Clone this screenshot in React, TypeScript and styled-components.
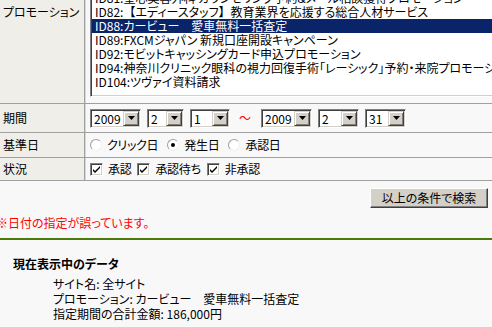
import React from "react";
import styled, { createGlobalStyle } from "styled-components";

const GlobalStyle = createGlobalStyle`
  html, body {
    margin: 0;
    padding: 0;
    background: #f8f8f8;
    overflow: hidden;
  }
  body {
    font-family: "Noto Sans CJK JP", "Noto Sans", sans-serif;
    font-size: 12px;
    color: #000;
    font-feature-settings: "palt";
  }
`;

const Page = styled.div`
  width: 492px;
  height: 327px;
  overflow: hidden;
`;

const Form = styled.div`
  width: 600px;
  margin-top: -9px;
  border-bottom: 1px solid #a0a0a0;
`;

const Row = styled.div<{ $h: number; $top?: boolean }>`
  display: grid;
  grid-template-columns: 85px 1fr;
  height: ${(p) => p.$h}px;
  border-top: 1px solid #a0a0a0;
  align-items: ${(p) => (p.$top ? "start" : "center")};
`;

const Label = styled.div<{ $pt?: number }>`
  align-self: stretch;
  display: flex;
  align-items: ${(p) => (p.$pt ? "flex-start" : "center")};
  padding: ${(p) => p.$pt ?? 0}px 0 0 3px;
  background: #efeee8;
  border-right: 1px solid #a0a0a0;
  line-height: 14px;
`;

const Value = styled.div<{ $pt?: number; $gap?: number }>`
  align-self: stretch;
  display: flex;
  align-items: ${(p) => (p.$pt !== undefined ? "flex-start" : "center")};
  padding: ${(p) => p.$pt ?? 0}px 0 0 4px;
  border-left: 1px solid #d8d8d8;
  gap: ${(p) => p.$gap ?? 6}px;
  line-height: 14px;
`;

const ListBox = styled.div`
  width: 440px;
  height: 101px;
  box-sizing: border-box;
  background: #fff;
  border: 1px solid;
  border-color: #808080 #fff #fff #808080;
  box-shadow: inset 1px 1px #404040, inset -1px -1px #d4d0c8;
  padding: 1px;
  overflow: hidden;
`;

const ListItems = styled.div`
  margin-top: -7px;
`;

const ListItem = styled.div<{ $selected?: boolean }>`
  height: 14px;
  line-height: 14px;
  padding-left: 3px;
  white-space: nowrap;
  background: ${(p) => (p.$selected ? "#0a246a" : "transparent")};
  color: ${(p) => (p.$selected ? "#fff" : "#000")};
`;

const Bracket = styled.span`
  font-feature-settings: normal;
`;

const SelectBox = styled.div<{ $w: number }>`
  width: ${(p) => p.$w}px;
  height: 19px;
  box-sizing: border-box;
  display: flex;
  align-items: stretch;
  background: #fff;
  border: 1px solid;
  border-color: #808080 #fff #fff #808080;
  box-shadow: inset 1px 1px #404040, inset -1px -1px #d4d0c8;
  padding: 1px;
`;

const SelectText = styled.div`
  flex: 1;
  padding-left: 2px;
  line-height: 15px;
`;

const ArrowButton = styled.div`
  width: 16px;
  box-sizing: border-box;
  background: #d4d0c8;
  border: 1px solid;
  border-color: #d4d0c8 #404040 #404040 #d4d0c8;
  box-shadow: inset 1px 1px #fff, inset -1px -1px #808080;
  display: flex;
  align-items: center;
  justify-content: center;
`;

const Tilde = styled.span`
  color: #ff0000;
  margin: 0 4px 0 3px;
`;

const Option = styled.label`
  display: flex;
  align-items: center;
  gap: 5px;
  letter-spacing: -0.3px;
`;

const Radio = styled.span<{ $checked?: boolean }>`
  width: 12px;
  height: 12px;
  box-sizing: border-box;
  border-radius: 50%;
  border: 1px solid;
  border-color: #a0a0a0 #f0f0f0 #f0f0f0 #a0a0a0;
  background: #fff;
  display: flex;
  align-items: center;
  justify-content: center;
  &::after {
    content: "";
    width: 4px;
    height: 4px;
    border-radius: 50%;
    background: ${(p) => (p.$checked ? "#000" : "transparent")};
  }
`;

const Check = styled.span`
  width: 13px;
  height: 13px;
  box-sizing: border-box;
  background: #fff;
  border: 1px solid;
  border-color: #808080 #fff #fff #808080;
  box-shadow: inset 1px 1px #404040, inset -1px -1px #d4d0c8;
  display: flex;
  align-items: center;
  justify-content: center;
`;

const ButtonRow = styled.div`
  display: flex;
  justify-content: flex-end;
  padding: 7px 4px 0 0;
`;

const Button = styled.button`
  width: 118px;
  height: 20px;
  padding: 0;
  font: inherit;
  font-feature-settings: "palt";
  line-height: 14px;
  color: #000;
  background: #d4d0c8;
  border: 1px solid;
  border-color: #fff #404040 #404040 #fff;
  box-shadow: inset -1px -1px #808080;
`;

const ErrorText = styled.p`
  margin: 8px 0 0;
  line-height: 14px;
  color: #ff0000;
  text-indent: -4px;
`;

const Divider = styled.hr`
  margin: 8px 0 0;
  height: 2px;
  border: 0;
  background: #4b7a08;
`;

const Summary = styled.section`
  padding: 17px 0 0 13px;
`;

const SummaryTitle = styled.h3`
  margin: 0;
  font-size: 12px;
  font-weight: bold;
  line-height: 14px;
`;

const SummaryList = styled.div`
  margin-top: 5px;
  padding-left: 40px;
  line-height: 15px;
`;

const DownArrow = () => (
  <svg width="7" height="4" viewBox="0 0 7 4">
    <path d="M0 0h7L3.5 4z" fill="#000" />
  </svg>
);

const CheckMark = () => (
  <svg width="9" height="9" viewBox="0 0 9 9">
    <path d="M1 4l2 2 5-5v2L3 8 1 6z" fill="#000" />
  </svg>
);

const Select = ({ value, width }: { value: string; width: number }) => (
  <SelectBox $w={width}>
    <SelectText>{value}</SelectText>
    <ArrowButton>
      <DownArrow />
    </ArrowButton>
  </SelectBox>
);

const promotions: { id: string; label: React.ReactNode }[] = [
  { id: "ID81", label: "ID81:聖心美容外科 カウンセリング予約&メール相談獲得プロモーション" },
  {
    id: "ID82",
    label: (
      <>
        ID82:<Bracket>【</Bracket>エディースタッフ<Bracket>】</Bracket>
        教育業界を応援する総合人材サービス
      </>
    ),
  },
  { id: "ID88", label: "ID88:カービュー　愛車無料一括査定" },
  { id: "ID89", label: "ID89:FXCMジャパン 新規口座開設キャンペーン" },
  { id: "ID92", label: "ID92:モビットキャッシングカード申込プロモーション" },
  { id: "ID94", label: "ID94:神奈川クリニック眼科の視力回復手術「レーシック」予約・来院プロモーション" },
  { id: "ID104", label: "ID104:ツヴァイ資料請求" },
];

export default function App() {
  return (
    <Page>
      <GlobalStyle />
      <Form>
        <Row $h={111} $top>
          <Label $pt={13}>プロモーション</Label>
          <Value $pt={4}>
            <ListBox>
              <ListItems>
                {promotions.map((p) => (
                  <ListItem key={p.id} $selected={p.id === "ID88"}>
                    {p.label}
                  </ListItem>
                ))}
              </ListItems>
            </ListBox>
          </Value>
        </Row>
        <Row $h={28}>
          <Label>期間</Label>
          <Value>
            <Select value="2009" width={51} />
            <Select value="2" width={37} />
            <Select value="1" width={40} />
            <Tilde>〜</Tilde>
            <Select value="2009" width={51} />
            <Select value="2" width={41} />
            <Select value="31" width={41} />
          </Value>
        </Row>
        <Row $h={24}>
          <Label>基準日</Label>
          <Value $gap={9}>
            <Option>
              <Radio />
              クリック日
            </Option>
            <Option>
              <Radio $checked />
              発生日
            </Option>
            <Option>
              <Radio />
              承認日
            </Option>
          </Value>
        </Row>
        <Row $h={22}>
          <Label>状況</Label>
          <Value $gap={6}>
            <Option>
              <Check>
                <CheckMark />
              </Check>
              承認
            </Option>
            <Option>
              <Check>
                <CheckMark />
              </Check>
              承認待ち
            </Option>
            <Option>
              <Check>
                <CheckMark />
              </Check>
              非承認
            </Option>
          </Value>
        </Row>
      </Form>
      <ButtonRow>
        <Button>以上の条件で検索</Button>
      </ButtonRow>
      <ErrorText>※日付の指定が誤っています。</ErrorText>
      <Divider />
      <Summary>
        <SummaryTitle>現在表示中のデータ</SummaryTitle>
        <SummaryList>
          <div>サイト名: 全サイト</div>
          <div>プロモーション: カービュー　愛車無料一括査定</div>
          <div>指定期間の合計金額: 186,000円</div>
        </SummaryList>
      </Summary>
    </Page>
  );
}
